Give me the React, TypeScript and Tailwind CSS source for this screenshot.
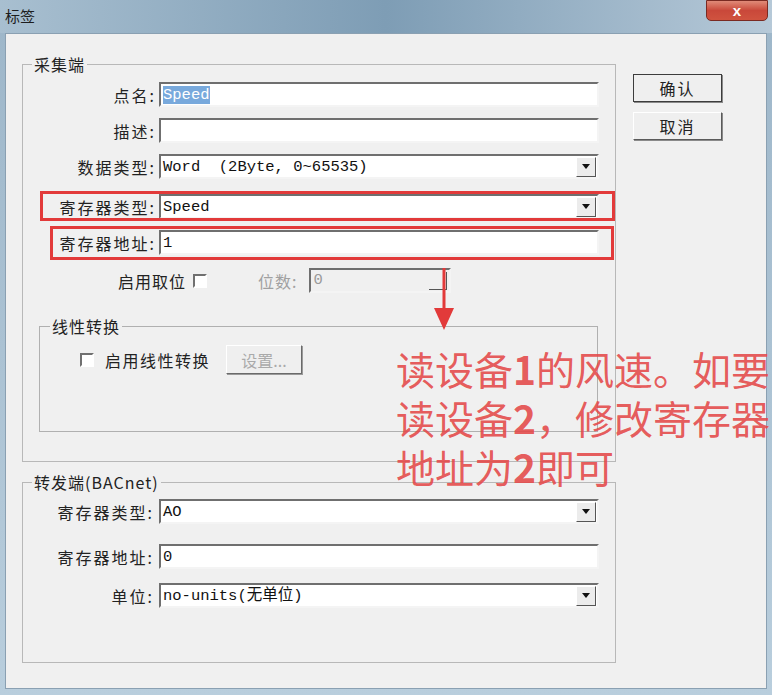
import React from 'react'

const cn = '[font-family:"Noto_Sans_CJK_SC","Noto_Sans",sans-serif]'
const mono = '[font-family:"Liberation_Mono","Noto_Sans_CJK_SC",monospace]'

function Sunken({ children, className = '', disabled = false }: { children?: React.ReactNode; className?: string; disabled?: boolean }) {
  return (
    <div
      className={`flex h-[25px] items-center border-2 border-t-[#6f6f6f] border-l-[#6f6f6f] border-b-[#f4f4f4] border-r-[#f4f4f4] ${disabled ? 'bg-[#f0f0f0]' : 'bg-white'} ${className}`}
    >
      {children}
    </div>
  )
}

function DropArrow() {
  return (
    <div className="ml-auto mr-[1px] flex h-[20px] w-[20px] items-center justify-center border border-b-[#555] border-r-[#555] border-t-white border-l-white bg-[#ececec]">
      <svg width="8" height="5" viewBox="0 0 8 5">
        <path d="M0 0h8L4 5z" fill="#111" />
      </svg>
    </div>
  )
}

function Row({ label, value, select = false, highlight = false, top = '', labelClass = '' }: { label: string; value: string; select?: boolean; highlight?: boolean; top?: string; labelClass?: string }) {
  return (
    <div className={`flex items-center ${top}`}>
      <div className={`w-[133px] whitespace-nowrap text-right text-[16px] leading-[20px] tracking-[2px] text-[#222] ${cn} ${labelClass}`}>{label}</div>
      <Sunken className="ml-[3px] w-[440px]">
        <span className={`ml-[2px] whitespace-pre text-[15.5px] leading-[18px] ${mono} ${highlight ? 'bg-[#78a9dc] text-white' : 'text-[#111]'}`}>
          {value}
        </span>
        {select && <DropArrow />}
      </Sunken>
    </div>
  )
}

function Legend({ text, className = '' }: { text: string; className?: string }) {
  return (
    <span className={`absolute -top-[12px] bg-[#f0f0f0] px-[2px] text-[16px] leading-[22px] tracking-[1px] text-[#222] ${cn} ${className}`}>{text}</span>
  )
}

export default function App() {
  return (
    <div className="relative h-[695px] w-[772px] overflow-hidden bg-gradient-to-b from-[#9db6c9] to-[#b9cedd]">
      {/* title bar */}
      <div className="flex h-[33px] items-start bg-gradient-to-r from-[#a8bfd0] via-[#7e9db5] to-[#b6c9d8]">
        <span className={`ml-[5px] mt-[5px] text-[15px] text-[#1d1d1d] ${cn}`}>标签</span>
        <div className="ml-auto mr-[4px] flex h-[21px] w-[62px] items-center justify-center rounded-b-[5px] border border-[#7a2a22] bg-gradient-to-b from-[#e08a78] via-[#c9483a] to-[#d0533f]">
          <span className="text-[15px] font-bold leading-none text-white [font-family:'Liberation_Sans',sans-serif]">x</span>
        </div>
      </div>

      {/* client area */}
      <div className="mx-[5px] h-[656px] border border-[#8aa0b2] bg-[#f0f0f0]">
        <div className="flex">
          <div className="ml-[16px] flex flex-col">
            {/* group 1 */}
            <div className="relative mt-[30px] h-[398px] w-[594px] border border-[#b8b8b8]">
              <Legend text="采集端" className="left-[9px]" />
              <Row top="mt-[17px]" label="点名:" value="Speed" highlight />
              <Row top="mt-[11px]" label="描述:" value="" />
              <Row top="mt-[11px]" label="数据类型:" value="Word  (2Byte, 0~65535)" select />
              <div className="relative mt-[15px]">
                <div className="pointer-events-none absolute -top-[3px] left-[17px] h-[30px] w-[575px] border-[3px] border-[#e23a3a]" />
                <Row label="寄存器类型:" value="Speed" select />
              </div>
              <div className="relative mt-[11px]">
                <div className="pointer-events-none absolute -top-[4px] left-[27px] h-[34px] w-[564px] border-[3px] border-[#e23a3a]" />
                <Row label="寄存器地址:" value="1" />
              </div>
              {/* bit select */}
              <div className="mt-[13px] flex items-center">
                <span className={`ml-[95px] text-[16px] tracking-[1px] text-[#222] ${cn}`}>启用取位</span>
                <div className="ml-[7px] h-[14px] w-[14px] border-2 border-t-[#707070] border-l-[#707070] border-b-white border-r-white bg-white" />
                <span className={`ml-[51px] text-[16px] tracking-[1px] text-[#a0a0a0] ${cn}`}>位数:</span>
                <Sunken disabled className="ml-[12px] w-[142px]">
                  <span className={`ml-[2px] text-[15.5px] text-[#9a9a9a] ${mono}`}>0</span>
                  <div className="ml-auto mr-[2px] h-[18px] w-[18px] border-b border-r border-[#555]" />
                </Sunken>
              </div>
              {/* linear group */}
              <div className="relative ml-[16px] mt-[33px] h-[106px] w-[559px] border border-[#b0b0b0]">
                <Legend text="线性转换" className="left-[10px]" />
                <div className="mt-[18px] flex items-center">
                  <div className="ml-[40px] h-[14px] w-[14px] border-2 border-t-[#707070] border-l-[#707070] border-b-white border-r-white bg-white" />
                  <span className={`ml-[11px] text-[16px] tracking-[1.5px] text-[#222] ${cn}`}>启用线性转换</span>
                  <div className="ml-[16px] flex h-[29px] w-[76px] items-center justify-center border border-t-white border-l-white border-b-[#6a6a6a] border-r-[#6a6a6a] bg-[#efefef] shadow-[1px_1px_0_#9a9a9a]">
                    <span className={`text-[16px] text-[#aaa] ${cn}`}>设置...</span>
                  </div>
                </div>
              </div>
            </div>

            {/* group 2 */}
            <div className="relative mt-[20px] h-[181px] w-[594px] border border-[#b8b8b8]">
              <Legend text="转发端(BACnet)" className="left-[9px]" />
              <Row top="mt-[16px]" label="寄存器类型:" value="AO" select labelClass="pr-[2px]" />
              <Row top="mt-[20px]" label="寄存器地址:" value="0" labelClass="pr-[2px]" />
              <Row top="mt-[14px]" label="单位:" value="no-units(无单位)" select labelClass="pr-[2px]" />
            </div>
          </div>

          {/* buttons */}
          <div className="ml-[17px] mt-[40px] flex flex-col gap-[10px]">
            {['确认', '取消'].map((t, i) => (
              <div
                key={t}
                className={`flex h-[28px] w-[89px] items-center justify-center border ${i === 0 ? 'border-[#3c3c3c]' : 'border-t-white border-l-white border-b-[#5a5a5a] border-r-[#5a5a5a]'} bg-[#efefef] shadow-[1px_1px_0_#8a8a8a]`}
              >
                <span className={`text-[16px] tracking-[2px] text-[#222] ${cn}`}>{t}</span>
              </div>
            ))}
          </div>
        </div>
      </div>

      {/* annotation arrow */}
      <svg className="absolute left-[432px] top-[268px]" width="24" height="64" viewBox="0 0 24 64">
        <path d="M12 0v44" stroke="#e23a3a" strokeWidth="3" />
        <path d="M2 40h20L12 62z" fill="#e23a3a" />
      </svg>

      {/* annotation text */}
      <div className={`absolute left-[396px] top-[344px] whitespace-nowrap text-[39px] leading-[49px] text-[#e44848]/90 ${cn}`}>
        <div>读设备<b>1</b>的风速。如要</div>
        <div>读设备<b>2</b>，修改寄存器</div>
        <div>地址为<b>2</b>即可</div>
      </div>
    </div>
  )
}
